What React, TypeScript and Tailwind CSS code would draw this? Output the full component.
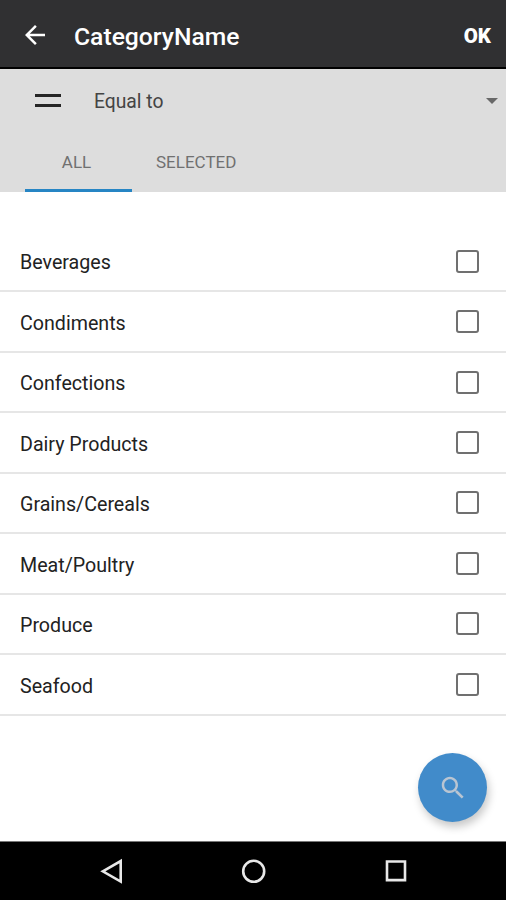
const categories = [
  'Beverages',
  'Condiments',
  'Confections',
  'Dairy Products',
  'Grains/Cereals',
  'Meat/Poultry',
  'Produce',
  'Seafood',
];

const Header = () => {
  return (
    <header className="flex h-[69px] items-center border-b-2 border-black bg-[#303032] pt-[3px] pr-[15px] pl-5 text-white">
      <svg viewBox="0 0 24 24" className="size-[30px]" fill="currentColor">
        <path d="M20 11H7.83l5.59-5.59L12 4l-8 8 8 8 1.41-1.41L7.83 13H20v-2z" />
      </svg>
      <h1 className="ml-6 pt-[3px] text-[24.7px] font-medium">CategoryName</h1>
      <button className="ml-auto pt-[3px] text-[20.5px] font-black">OK</button>
    </header>
  );
};

const Filter = () => {
  return (
    <section className="flex h-[123px] flex-col bg-[#dddddd]">
      <div className="flex h-16 items-center pr-2 pl-[35px]">
        <div className="mb-px flex w-[26px] flex-col gap-[7px]">
          <div className="h-[3px] bg-[#252525]"></div>
          <div className="h-[3px] bg-[#252525]"></div>
        </div>
        <span className="ml-[33px] pt-[3px] text-[19.3px] text-[#444444]">Equal to</span>
        <svg viewBox="0 0 12 6" className="ml-auto h-1.5 w-3" fill="#686868">
          <path d="M0 0h12L6 6z" />
        </svg>
      </div>
      <div className="flex flex-1 pl-[25px] text-[17px] text-[#707070]">
        <button className="w-[107px] border-b-[3px] border-[#2685c4] pt-[3px] pr-1">ALL</button>
        <button className="ml-6 border-b-[3px] border-transparent pt-[3px]">SELECTED</button>
      </div>
    </section>
  );
};

const CategoryList = () => {
  return (
    <ul className="mt-10">
      {categories.map((name) => (
        <li
          key={name}
          className="flex h-[60.45px] items-center justify-between border-b-2 border-[#e6e6e6] pr-[27px] pl-5"
        >
          <span className="pt-1 text-[19.65px] text-[#222222]">{name}</span>
          <span className="size-[23px] rounded-[3px] border-2 border-[#707070]"></span>
        </li>
      ))}
    </ul>
  );
};

const NavBar = () => {
  return (
    <nav className="h-[59px] border-t border-[#777777] bg-black">
      <svg viewBox="0 0 506 58" className="h-[58px] w-[506px]" fill="none" stroke="#e8e8e8" strokeWidth="2.6">
        <path d="M102.8 29.3 120.7 19v20.6z" />
        <circle cx="253.7" cy="29.3" r="10.5" />
        <path d="M387 19.5h18v18.6h-18z" />
      </svg>
    </nav>
  );
};

const App = () => {
  return (
    <div className="relative flex h-[900px] w-[506px] flex-col overflow-hidden bg-white font-[Roboto,sans-serif]">
      <Header />
      <Filter />
      <main className="flex-1">
        <CategoryList />
      </main>
      <button className="absolute right-[19px] bottom-[78px] flex size-[69px] items-center justify-center rounded-full bg-[#418bca] shadow-[2px_5px_8px_rgba(0,0,0,0.22)]">
        <svg viewBox="0 0 24 24" className="size-[30px]" fill="#b9c5d2">
          <path d="M15.5 14h-.79l-.28-.27C15.41 12.59 16 11.11 16 9.5 16 5.91 13.09 3 9.5 3S3 5.91 3 9.5 5.91 16 9.5 16c1.61 0 3.09-.59 4.23-1.57l.27.28v.79l5 4.99L20.49 19l-4.99-5zm-6 0C7.01 14 5 11.99 5 9.5S7.01 5 9.5 5 14 7.01 14 9.5 11.99 14 9.5 14z" />
        </svg>
      </button>
      <NavBar />
    </div>
  );
};

export default App;
